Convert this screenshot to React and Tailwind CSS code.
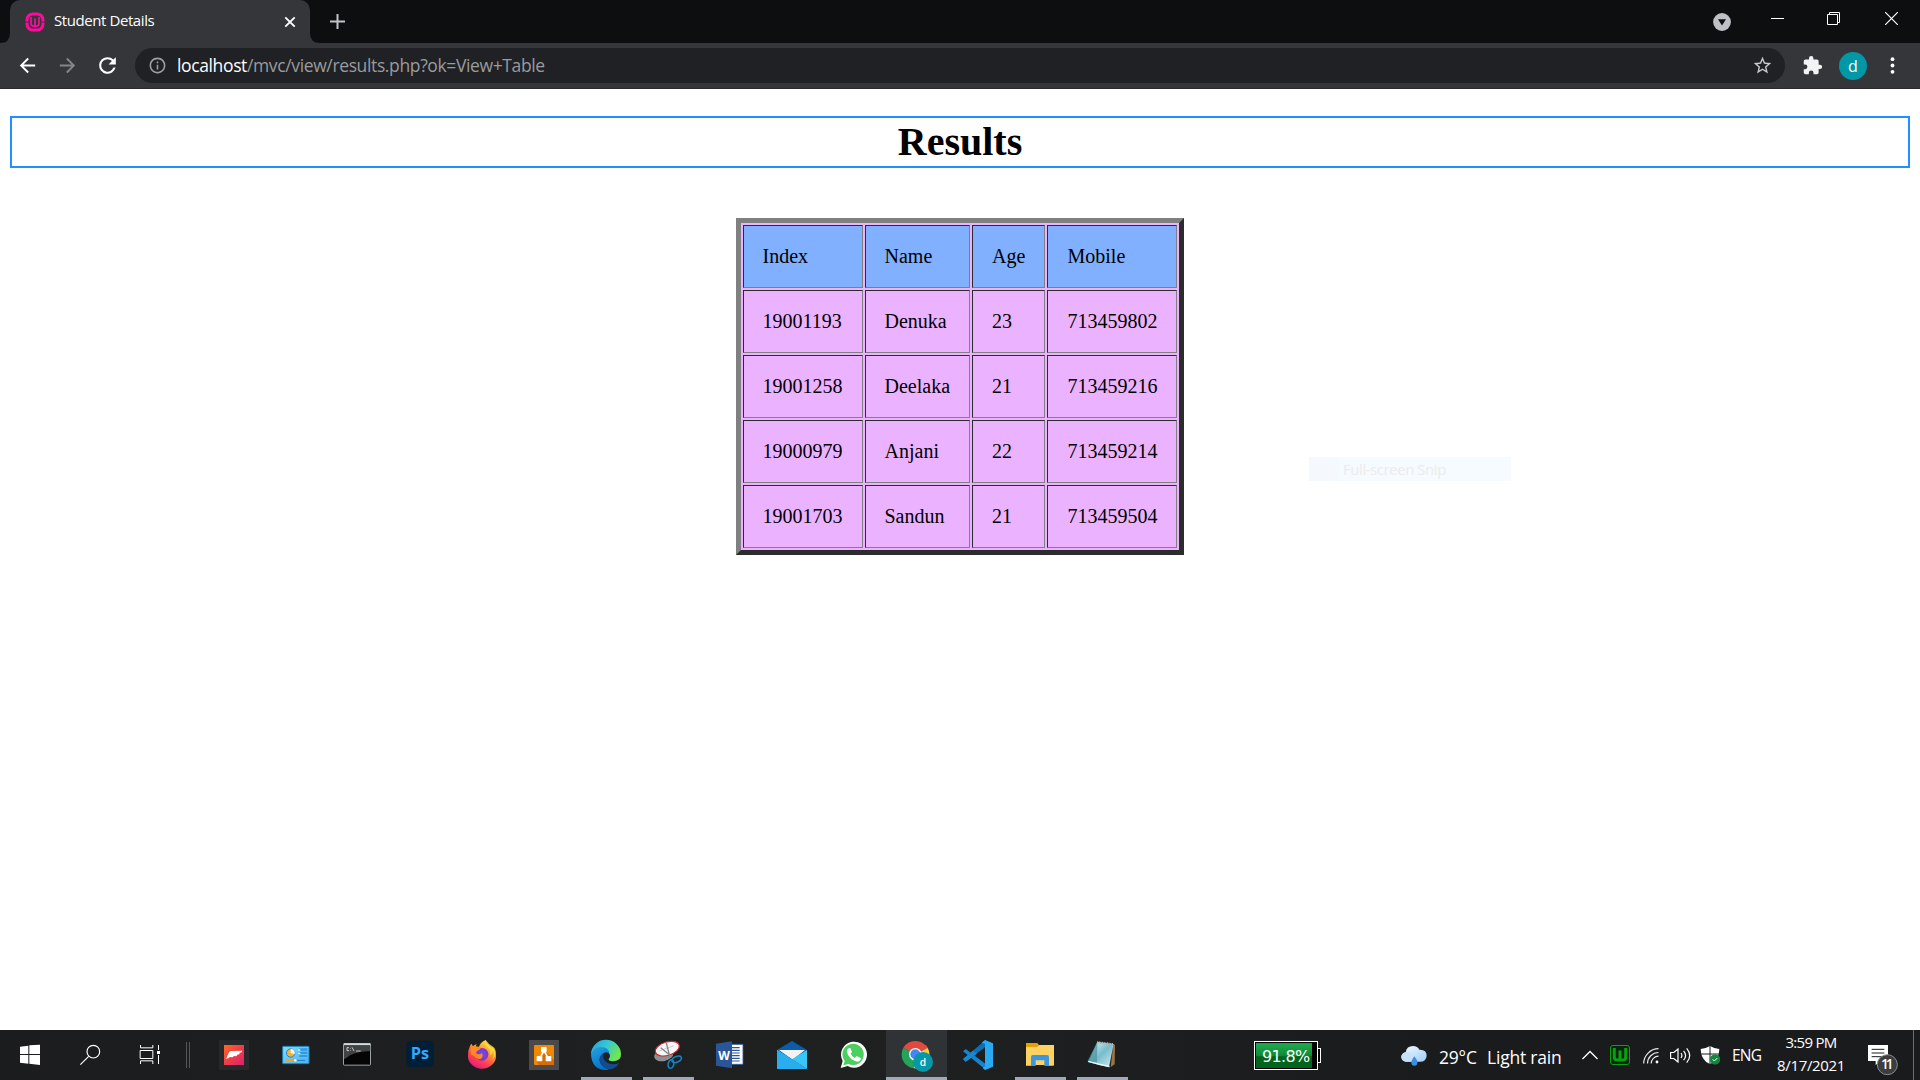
import React from "react";

const ui = "font-['Open_Sans','Noto_Sans',sans-serif]";

/* ---------- Browser chrome icons ---------- */

const WampBadge = () => (
  <svg className="h-5 w-5 shrink-0" viewBox="0 0 20 20" fill="none" stroke="#ff0a9c">
    <rect x="2" y="1.9" width="16" height="16.2" rx="6" strokeWidth="3" />
    <path d="M0 10h3.600M16.400 10H20" stroke="#35363a" strokeWidth="1.200" />
    <path d="M6 5v6.500q0 2.600 2.500 2.600h3q2.500 0 2.500-2.600V5M10 6.500v7" strokeWidth="1.700" />
  </svg>
);

const material = {
  back: "M20 11H7.83l5.59-5.59L12 4l-8 8 8 8 1.41-1.41L7.83 13H20v-2z",
  forward: "M12 4l-1.41 1.41L16.17 11H4v2h12.17l-5.58 5.59L12 20l8-8z",
  reload:
    "M17.65 6.35A7.96 7.96 0 0 0 12 4a8 8 0 1 0 7.73 10h-2.08A6 6 0 1 1 12 6c1.66 0 3.14.69 4.22 1.78L13 11h7V4z",
  info: "M11 7h2v2h-2zm0 4h2v6h-2zm1-9C6.48 2 2 6.48 2 12s4.48 10 10 10 10-4.48 10-10S17.52 2 12 2zm0 18c-4.41 0-8-3.59-8-8s3.59-8 8-8 8 3.59 8 8-3.59 8-8 8z",
  star: "M22 9.24l-7.19-.62L12 2 9.19 8.63 2 9.24l5.46 4.73L5.82 21 12 17.27 18.18 21l-1.63-7.03zM12 15.4l-3.76 2.27 1-4.28-3.32-2.88 4.38-.38L12 6.1l1.71 4.04 4.38.38-3.32 2.88 1 4.28z",
  puzzle:
    "M20.5 11H19V7c0-1.1-.9-2-2-2h-4V3.5a2.5 2.5 0 0 0-5 0V5H4c-1.1 0-2 .9-2 2v3.8h1.5a2.7 2.7 0 0 1 0 5.4H2V20c0 1.1.9 2 2 2h3.8v-1.5a2.7 2.7 0 0 1 5.4 0V22H17c1.1 0 2-.9 2-2v-4h1.5a2.5 2.5 0 0 0 0-5z",
};

const Glyph = ({ name, className }) => (
  <svg className={className} viewBox="0 0 24 24" fill="currentColor">
    <path d={material[name]} />
  </svg>
);

function TabStrip() {
  return (
    <div className="flex h-[43px] bg-[#0d0e10]">
      <svg className="h-[43px] w-[10px]" viewBox="0 0 10 43">
        <path d="M10 33Q10 43 0 43H10Z" fill="#35363a" />
      </svg>
      <div className="flex h-[43px] w-[300px] items-center rounded-t-[10px] bg-[#35363a] pl-[15px]">
        <WampBadge />
        <span className={`-mt-[2px] ml-[9px] w-[230px] whitespace-nowrap text-[15px] tracking-[-0.42px] text-white ${ui}`}>
          Student Details
        </span>
        <svg className="h-3 w-3" viewBox="0 0 12 12" stroke="#fff" strokeWidth="1.9">
          <path d="M1.3 1.3l9.4 9.4M10.7 1.3L1.3 10.7" />
        </svg>
      </div>
      <svg className="h-[43px] w-[10px]" viewBox="0 0 10 43">
        <path d="M0 33Q0 43 10 43H0Z" fill="#35363a" />
      </svg>
      <svg className="ml-[10px] mt-[14px] h-[15px] w-[15px]" viewBox="0 0 15 15" stroke="#c3c4c9" strokeWidth="2">
        <path d="M7.5 0v15M0 7.5h15" />
      </svg>
      <div className="ml-auto flex pr-[22px]">
        <svg className="mt-[13px] h-[18px] w-[18px]" viewBox="0 0 18 18">
          <circle cx="9" cy="9" r="8.9" fill="#bdc1c6" />
          <path d="M5 6.2h8L9 12.4Z" fill="#0d0e10" />
        </svg>
        <svg className="ml-[40px] mt-[12px] h-[13px] w-[13px]" viewBox="0 0 13 13" shapeRendering="crispEdges">
          <path d="M0 6h13v1H0z" fill="#fff" />
        </svg>
        <svg className="ml-[43px] mt-[12px] h-[13px] w-[13px]" viewBox="0 0 13 13" fill="none" stroke="#fff">
          <path d="M.5 2.5h10v10H.5zM2.5 2.5v-2h10v10h-2" />
        </svg>
        <svg className="ml-[45px] mt-[12px] h-[13px] w-[13px]" viewBox="0 0 13 13" stroke="#fff" strokeWidth="1.2">
          <path d="M0 0l13 13M13 0L0 13" />
        </svg>
      </div>
    </div>
  );
}

function Toolbar() {
  return (
    <div className="flex h-[46px] items-center border-b border-[#2a2b2e] bg-[#35363a]">
      <Glyph name="back" className="ml-[16px] h-[23px] w-[23px] text-white" />
      <Glyph name="forward" className="ml-[17px] h-[23px] w-[23px] text-[#85868a]" />
      <Glyph name="reload" className="ml-[16px] h-[25px] w-[25px] text-white" />
      <div className="ml-[15px] flex h-[35px] w-[1650px] items-center rounded-full bg-[#202124] pl-[13px] pr-[12px]">
        <Glyph name="info" className="h-[19px] w-[19px] text-[#9aa0a6]" />
        <span className={`ml-[10px] whitespace-nowrap text-[17.5px] tracking-[-0.37px] text-[#999b9e] ${ui}`}>
          <span className="text-white">localhost</span>/mvc/view/results.php?ok=View+Table
        </span>
        <Glyph name="star" className="ml-auto h-[21px] w-[21px] text-[#c9cacd]" />
      </div>
      <Glyph name="puzzle" className="ml-[17px] h-[21px] w-[21px] text-[#f1f3f4]" />
      <div className={`ml-[16px] flex h-7 w-7 items-center justify-center rounded-full bg-[#0097a7] text-[16px] text-white ${ui}`}>
        d
      </div>
      <svg className="ml-[23px] h-[17px] w-[5px]" viewBox="0 0 5 17" fill="#fff">
        <circle cx="2.5" cy="2.2" r="1.9" />
        <circle cx="2.5" cy="8.5" r="1.9" />
        <circle cx="2.5" cy="14.8" r="1.9" />
      </svg>
    </div>
  );
}

/* ---------- Page ---------- */

const rows = [
  ["19001193", "Denuka", "23", "713459802"],
  ["19001258", "Deelaka", "21", "713459216"],
  ["19000979", "Anjani", "22", "713459214"],
  ["19001703", "Sandun", "21", "713459504"],
];

const cell =
  "h-[63px] border border-t-[#2c2c2c] border-l-[#2c2c2c] border-r-[#808080] border-b-[#808080] pb-px";
const inset = ["pl-[18.5px]", "pl-[18.5px]", "pl-[19px]", "pl-[19.5px]"];

const Row = ({ items, head }) => (
  <div className="grid grid-cols-[120px_105px_73px_130px] gap-[2px]">
    {items.map((t, i) => (
      <div key={i} className={`${cell} ${inset[i]} flex items-center ${head ? "bg-[#80b0ff]" : ""}`}>
        {t}
      </div>
    ))}
  </div>
);

function Page() {
  return (
    <main className="flex h-[941px] flex-col items-center bg-white px-[10px] pt-[27px] font-['Liberation_Serif',serif] text-black">
      <h1 className="h-[52px] w-full border-2 border-[#1e90ff] text-center text-[40px] font-bold leading-[48px]">
        Results
      </h1>
      <div className="mt-[50px] flex h-[337px] w-[448px] flex-col gap-[2px] border-[5px] border-b-[#2c2c2c] border-l-[#808080] border-r-[#2c2c2c] border-t-[#808080] bg-[#ebb3ff] p-[2px] text-[20px]">
        <Row head items={["Index", "Name", "Age", "Mobile"]} />
        {rows.map((r) => (
          <Row key={r[0]} items={r} />
        ))}
      </div>
    </main>
  );
}

/* ---------- Taskbar icons ---------- */

const Ico = ({ x, children, className = "" }) => (
  <svg className={`h-[30px] w-[30px] shrink-0 overflow-visible ${className}`} viewBox={`${x} 60 90 90`}>
    {children}
  </svg>
);

const Fitbit = () => (
  <Ico x={657}>
    <defs>
      <linearGradient id="fb" x1="0" y1="0" x2="1" y2="1">
        <stop offset="0" stopColor="#ff6a1f" />
        <stop offset=".5" stopColor="#f23c47" />
        <stop offset="1" stopColor="#d42473" />
      </linearGradient>
    </defs>
    <path d="M657 60h90v90h-90z" fill="#272829" />
    <path d="M672 75h60v60h-60z" fill="url(#fb)" />
    <path d="M678 117l9-20q3-4 9-4l31-1-2 5-6 1-1 5-6 1-3 5-7-1-4 4-8-1-6 4Z" fill="#fff" />
  </Ico>
);

const ControlPanel = () => (
  <Ico x={843}>
    <defs>
      <linearGradient id="cp" x1="0" y1="0" x2="1" y2="1">
        <stop offset="0" stopColor="#86d9fb" />
        <stop offset="1" stopColor="#49b4ee" />
      </linearGradient>
    </defs>
    <rect x="848" y="79" width="79" height="52" rx="2" fill="url(#cp)" stroke="#1c82b8" strokeWidth="3" />
    <circle cx="872" cy="99" r="12.5" fill="#f8b32b" stroke="#2383d6" strokeWidth="3" />
    <path d="M872 99V86a13 13 0 0 1 12 17Z" fill="#e6f7ff" />
    <path d="M898 85h24v7h-24zM898 95h24v7h-24zM898 105h24v6h-24z" fill="#3299e1" />
    <path d="M895 88h6v4h-6zM895 98h6v4h-6z" fill="#d9f4ff" />
    <path d="M857 121h28" stroke="#f2a320" strokeWidth="4" />
    <path d="M885 121h30" stroke="#1a78cc" strokeWidth="3" />
    <circle cx="886" cy="121" r="4" fill="#fff1cf" />
  </Ico>
);

const Cmd = () => (
  <Ico x={39}>
    <rect x="40.500" y="70.500" width="81" height="65" rx="2" fill="#050505" stroke="#9ba2a7" strokeWidth="3" />
    <path d="M42 70h79v6H42z" fill="#d4d9dc" />
    <path d="M42 77h79v16q-55 2-74 22l-5 3z" fill="#54585a" opacity=".75" />
    <g fill="none" stroke="#e7e7e7" strokeWidth="2.4">
      <path d="M57 83h-6v9h6M61 84v2M61 90v2M66 82l6 11M78 93h14" />
    </g>
  </Ico>
);

const Photoshop = () => (
  <Ico x={225}>
    <rect x="229" y="62" width="82" height="79" rx="14" fill="#001e36" />
    <text x="270" y="117" textAnchor="middle" fontFamily="Open Sans" fontSize="46" fontWeight="700" fill="#31a8ff" textLength="55" lengthAdjust="spacingAndGlyphs">
      Ps
    </text>
  </Ico>
);

const Firefox = () => (
  <Ico x={411}>
    <defs>
      <linearGradient id="ff" x1=".8" y1="0" x2=".25" y2="1">
        <stop offset="0" stopColor="#fff44f" />
        <stop offset=".35" stopColor="#ffa02b" />
        <stop offset=".7" stopColor="#ff4050" />
        <stop offset="1" stopColor="#e31587" />
      </linearGradient>
      <radialGradient id="ffg">
        <stop offset="0" stopColor="#5a58f0" />
        <stop offset="1" stopColor="#8a2ed0" />
      </radialGradient>
    </defs>
    <path d="M420 78q1-4 5-7 1 5 4 7 6-4 12-5-3 3-4 7h10q4-14 20-20 0 9 9 15 5 4 8 10l2-5q12 14 12 29a42 37 0 0 1-84 0q-1-17 6-31Z" fill="url(#ff)" />
    <circle cx="456" cy="103" r="19" fill="url(#ffg)" />
    <path d="M422 82q9-7 20-2l10 3q-1 6-9 9-4 2-5 8 9 6 18 0 5 9-3 16-12 4-21-8l-9-5Z" fill="#ff8a1f" />
    <path d="M467 60q-6 12 6 22 11 9 7 24 8-4 7-16 9 14 0 29 11-10 10-26-2-11-10-14-11-6-20-19Z" fill="#ffdf3d" opacity=".85" />
  </Ico>
);

const DrawIo = () => (
  <Ico x={597}>
    <path d="M597 60h90v90h-90z" fill="#4a4a4a" />
    <rect x="612" y="75" width="60" height="60" rx="3" fill="#f08705" />
    <path d="M648 96l24 24v15h-46l-6-9z" fill="#d96b05" />
    <path d="M642 92l-13 23M642 92l13 23" stroke="#fff" strokeWidth="5" />
    <rect x="633" y="81" width="17" height="16" rx="2" fill="#fff" />
    <rect x="620" y="108" width="17" height="16" rx="2" fill="#fff" />
    <rect x="647" y="108" width="17" height="16" rx="2" fill="#fff" />
  </Ico>
);

const Edge = () => (
  <Ico x={783}>
    <defs>
      <linearGradient id="eg1" x1="0" y1="0" x2="1" y2=".5">
        <stop offset="0" stopColor="#259cd8" />
        <stop offset=".5" stopColor="#36c6d4" />
        <stop offset="1" stopColor="#70e650" />
      </linearGradient>
      <linearGradient id="eg2" x1="0" y1="0" x2=".5" y2="1">
        <stop offset="0" stopColor="#25a4e5" />
        <stop offset="1" stopColor="#0870c4" />
      </linearGradient>
    </defs>
    <path d="M783 103a45 43 0 0 1 90-1q1 20-22 22-15 0-16-6 6-5 4-14-5-14-25-16-19-1-31 15Z" fill="url(#eg1)" />
    <path d="M783 104q6-23 31-23 22 1 25 20-13-8-24 3-13 16 1 32 9 10 21 13-50 6-54-45Z" fill="url(#eg2)" />
    <path d="M821 99q-23 16-5 37 18 20 38 7 10-6 14-15-18 10-36 0-16-10-11-29Z" fill="#114b91" />
    <path d="M823 98q-7 14 5 23 14 8 30 5-20 0-23-7 6-6 4-14-5-10-16-7Z" fill="#1c2426" />
  </Ico>
);

const Snip = () => (
  <Ico x={39}>
    <ellipse cx="71" cy="106" rx="29" ry="17" fill="#8d8f90" transform="rotate(-12 71 106)" />
    <ellipse cx="82" cy="86" rx="37" ry="20" fill="#f7f7f7" stroke="#cf2428" strokeWidth="3.500" transform="rotate(-17 82 86)" />
    <path d="M55 94l47-17" stroke="#b8b8b8" strokeWidth="2" />
    <path d="M79 69l11 43M62 83l32 26" stroke="#838689" strokeWidth="4" />
    <g fill="none" stroke="#157fc1" strokeWidth="5">
      <ellipse cx="110" cy="118" rx="15" ry="8.500" transform="rotate(-22 110 118)" />
      <ellipse cx="93" cy="132" rx="8.500" ry="13" transform="rotate(12 93 132)" />
    </g>
  </Ico>
);

const Word = () => (
  <Ico x={225}>
    <path d="M270 73h39v60h-39z" fill="#fff" stroke="#2b579a" strokeWidth="2.500" />
    <path d="M276 83h23M276 91h23M276 99h23M276 107h23M276 115h23M276 123h23" stroke="#2b579a" strokeWidth="3.500" />
    <path d="M228 71l48-7v81l-48-8Z" fill="#2a5699" />
    <text x="252" y="119" textAnchor="middle" fontFamily="Open Sans" fontWeight="700" fontSize="39" fill="#fff" textLength="35" lengthAdjust="spacingAndGlyphs">
      W
    </text>
  </Ico>
);

const MailIcon = () => (
  <Ico x={411}>
    <path d="M411 90l45-27 45 27v20h-90Z" fill="#0b5cab" />
    <path d="M417 90h78l-37 29Z" fill="#f2f2f2" />
    <path d="M411 90l90 57h-90Z" fill="#2fb5f0" />
    <path d="M501 90v57l-45-29Z" fill="#39c6f5" />
    <path d="M456 118l45 29h-90Z" fill="#1993e0" />
    <path d="M411 90v57l45-29Z" fill="#25a4e8" />
    <path d="M411 90v57h90l-45-29Z" fill="#29adee" />
  </Ico>
);

const WhatsApp = () => (
  <Ico x={597}>
    <path d="M602 144l6-21a39 39 0 1 1 15 15Z" fill="#fff" />
    <path d="M610 136l4-13a32 32 0 1 1 11 9Z" fill="#4bd05f" />
    <path d="M629 84c-4 0-8 4-8 10 0 14 18 31 32 31 6 0 10-5 10-10l-13-7-5 6q-9-4-13-13l4-5-5-12Z" fill="#fff" />
  </Ico>
);

const ChromeIcon = () => (
  <Ico x={783}>
    <path d="M826 104L790 83a42 42 0 0 1 73 2Z" fill="#e04a3f" />
    <path d="M826 104L790 83a42 42 0 0 0 31 62Z" fill="#23a45b" />
    <path d="M826 104l37-21a42 42 0 0 1-42 62Z" fill="#fccb39" />
    <path d="M826 85h38l-5-9-33-3Z" fill="#e04a3f" />
    <circle cx="826" cy="103" r="19" fill="#fff" />
    <circle cx="826" cy="103" r="15" fill="#4285f4" />
    <circle cx="849" cy="126" r="30" fill="#0797a6" />
    <text x="849" y="137" textAnchor="middle" fontFamily="Open Sans" fontSize="31" fontWeight="600" fill="#fff">
      d
    </text>
  </Ico>
);

const VsCode = () => (
  <Ico x={39}>
    <path d="M39 94l8-7 60 45v17Z" fill="#1583cf" />
    <path d="M39 117l68-57v20L47 125Z" fill="#0a6fb8" />
    <path d="M39 117l30-25 12 9-34 24Z" fill="#1a87d2" />
    <path d="M105 60l24 10v70l-24 10-7-6 7-5V71l-10-3Z" fill="#28a9f1" />
  </Ico>
);

const Explorer = () => (
  <Ico x={225}>
    <path d="M228 69h34l5 6h45v20h-84Z" fill="#e2a106" />
    <path d="M228 81h33l7-6h44v60h-84Z" fill="#fdd262" />
    <path d="M243 138v-27q0-6 6-6h42q6 0 6 6v27h-14v-17h-26v17Z" fill="#3b97e0" />
    <path d="M228 135h15v3h-15zM297 135h14v3h-14z" fill="#d9a834" />
  </Ico>
);

const Notepad = () => (
  <Ico x={411}>
    <defs>
      <linearGradient id="np" x1="0" y1="0" x2="1" y2="1">
        <stop offset="0" stopColor="#e3f5f8" />
        <stop offset=".5" stopColor="#78bccb" />
        <stop offset="1" stopColor="#d9eef1" />
      </linearGradient>
    </defs>
    <path d="M490 72l5 3-1 58-12 8Z" fill="#9d7440" />
    <path d="M442 66l49 6-14 70-62-15Z" fill="url(#np)" />
    <path d="M442 66l-29 56q13 5 28 6Z" fill="#4c96a2" opacity=".75" />
    <path d="M413 122l64 15 3 5-30-6-35-10Z" fill="#edf7f7" />
    <path d="M441 67l50 6" stroke="#b6b6b6" strokeWidth="7" strokeDasharray="3 2" />
  </Ico>
);

const apps = [
  { C: Fitbit }, { C: ControlPanel }, { C: Cmd }, { C: Photoshop }, { C: Firefox }, { C: DrawIo },
  { C: Edge, open: true }, { C: Snip, open: true }, { C: Word }, { C: MailIcon }, { C: WhatsApp },
  { C: ChromeIcon, active: true }, { C: VsCode }, { C: Explorer, open: true }, { C: Notepad, open: true },
];

const AppButton = ({ C, open, active }) => (
  <div className={`flex h-[50px] w-[61px] flex-col items-center ${active ? "bg-[#2f3336]" : ""}`}>
    <div className="flex h-[47px] w-full pl-[15px] pt-[10px]">
      <C />
    </div>
    {active && <div className="h-[3px] w-full bg-[#a0a9b8]" />}
    {open && <div className="h-[3px] w-[51px] bg-[#a0a9b8]" />}
  </div>
);

const Battery = () => (
  <div className="mt-[11px] flex h-[29px] items-center">
    <div className="h-[29px] w-[64px] border border-white bg-black p-px">
      <div
        className={`h-[25px] w-[56px] whitespace-nowrap bg-linear-to-b from-[#1ca64c] from-10% via-[#0f8a34] via-50% to-[#02651d] to-55% pl-[6px] text-[16px] leading-[27px] tracking-[-0.68px] text-white font-['DejaVu_Sans',sans-serif]`}
      >
        91.8%
      </div>
    </div>
    <div className="h-[15px] w-[3px] border border-l-0 border-white bg-black" />
  </div>
);

function Tray() {
  return (
    <div className={`flex h-[50px] text-white ${ui}`}>
      <svg className="ml-[80px] mt-[15px] h-[21px] w-[26px]" viewBox="61 75 78 63">
        <defs>
          <linearGradient id="cl" x1="0" y1="0" x2="1" y2="1">
            <stop offset="0" stopColor="#f3faff" />
            <stop offset="1" stopColor="#9fcdf5" />
          </linearGradient>
        </defs>
        <path d="M77 125a14 14 0 0 1-2-28q3-19 22-19 14 0 19 11 22-1 22 18-1 18-20 18Z" fill="url(#cl)" />
        <path d="M77 125a14 14 0 0 1-2-28q17-2 20 10 9 2 8 18Z" fill="#c5e2fb" />
        <path d="M101 109q10 12 9 19a9 9 0 0 1-18 0q0-7 9-19Z" fill="#3b8ee8" />
      </svg>
      <span className="ml-[12px] mt-[2px] w-[48px] whitespace-nowrap text-[17.5px] leading-[50px] tracking-[-0.2px]">29°C</span>
      <span className="mt-[2px] w-[95px] whitespace-nowrap text-[17.5px] leading-[50px] tracking-[-0.2px]">Light rain</span>
      <svg className="mt-[20px] h-[10px] w-[16px]" viewBox="0 0 16 10" fill="none" stroke="#fff" strokeWidth="1.300">
        <path d="M.5 9L8 1.500 15.500 9" />
      </svg>
      <svg className="ml-[12px] mt-[15px] h-5 w-5" viewBox="0 0 20 20" fill="none" stroke="#08a20c">
        <rect x=".5" y=".5" width="19" height="19" rx="2.500" fill="#04260a" />
        <path d="M4.300 3v9q0 3 3 3h5.400q3 0 3-3V3M10 5.500V14" strokeWidth="3" />
      </svg>
      <svg className="ml-[13px] mt-[18px] h-[16px] w-[16px]" viewBox="0 0 16 16" fill="none" stroke="#e9e9e9" strokeWidth="1.200">
        <path d="M.7 15.500A15 15 0 0 1 15.500.7M4.500 15.500a11 11 0 0 1 11-11M8.200 15.500a7.300 7.300 0 0 1 7.300-7.300" />
        <circle cx="14" cy="14" r="1.400" fill="#fff" stroke="none" />
      </svg>
      <svg className="ml-[11px] mt-[17px] h-[17px] w-[21px]" viewBox="0 0 21 17" fill="none" stroke="#fff" strokeWidth="1.200">
        <path d="M.6 5.500h3.200L8 2v13l-4.200-3.500H.6ZM11 6q1.800 2.500 0 5M13.600 3.800q4 4.700 0 9.400M16.700 1.300q6 7.200 0 14.400" />
      </svg>
      <svg className="ml-[9px] mt-[16px] h-[20px] w-[20px]" viewBox="180 78 60 60">
        <path d="M210 78q13 8 28 9 0 34-28 45-28-11-28-45 15-1 28-9Z" fill="#fff" />
        <path d="M210 78v55M181 102h57" stroke="#1b1c1d" strokeWidth="3" />
        <circle cx="225" cy="118" r="15.500" fill="#10893e" />
        <path d="M218 118l5 5 9-9" fill="none" stroke="#fff" strokeWidth="3" />
      </svg>
      <span className="ml-[12px] w-[35px] whitespace-nowrap text-[15.5px] leading-[50px] tracking-[-0.8px]">ENG</span>
      <div className="mt-[2px] flex w-[88px] flex-col items-center whitespace-nowrap text-[15px] leading-[23px]">
        <span className="-mt-px tracking-[-0.7px]">3:59 PM</span>
        <span className="tracking-[-0.35px]">8/17/2021</span>
      </div>
      <svg className="ml-[13px] mt-[15px] h-[31px] w-[31px]" viewBox="687 75 93 93">
        <path d="M687 75h60v48h-25l-12 13v-13h-23Z" fill="#fff" />
        <path d="M698 88h38M698 99h38M698 110h38" stroke="#1b1c1d" strokeWidth="3" />
        <circle cx="745" cy="134" r="30" fill="#3c3d3e" stroke="#8c8d8e" strokeWidth="3" />
        <text x="745" y="148" textAnchor="middle" fontFamily="Open Sans" fontSize="41" fontWeight="600" fill="#fff" textLength="38">
          11
        </text>
      </svg>
      <div className="ml-[14px] h-[50px] w-px bg-[#6b6c6d]" />
    </div>
  );
}

function Taskbar() {
  return (
    <footer className="flex h-[50px] bg-linear-to-r from-[#1b1c1e] via-[#1f2121] via-40% to-[#1a1b1d] to-75%">
      <Ico x={45} className="ml-[15px] mt-[10px]">
        <path d="M60 80l25-3v25H60zM88 76l32-2v28H88zM60 105h25v26l-25-3zM88 105h32v30l-32-4z" fill="#fff" />
      </Ico>
      <Ico x={225} className="ml-[30px] mt-[10px]">
        <circle cx="280" cy="95" r="19" fill="none" stroke="#fff" strokeWidth="3.500" />
        <path d="M266 109l-25 25" stroke="#fff" strokeWidth="3.500" />
      </Ico>
      <Ico x={405} className="ml-[30px] mt-[10px]">
        <g fill="none" stroke="#fff" strokeWidth="3">
          <path d="M421.500 75v8.500h37V75M421.500 132v-9.500h37v9.500M420.500 91.500h38v24h-38zM475.500 75v15M475.500 105v27" />
        </g>
        <path d="M471 93h9v9h-9z" fill="#fff" />
      </Ico>
      <div className="ml-[21px] mt-[12px] h-[26px] w-[4px] border-x border-[#55575a]" />
      <div className="ml-[14px] flex w-[1050px] gap-px">
        {apps.map((a, i) => (
          <AppButton key={i} {...a} />
        ))}
      </div>
      <Battery />
      <Tray />
    </footer>
  );
}

export default function App() {
  return (
    <div className="relative h-[1080px] w-[1920px] overflow-hidden bg-white">
      <TabStrip />
      <Toolbar />
      <Page />
      <Taskbar />
      <div className={`absolute left-[1309px] top-[457px] flex h-6 w-[202px] bg-[#f5fbfe] ${ui}`}>
        <div className="h-6 w-[30px] bg-[#f5f9fe]" />
        <span className="ml-[4px] whitespace-nowrap text-[15px] leading-[25px] tracking-[-0.45px] text-[#ececec]">
          Full-screen Snip
        </span>
      </div>
    </div>
  );
}
